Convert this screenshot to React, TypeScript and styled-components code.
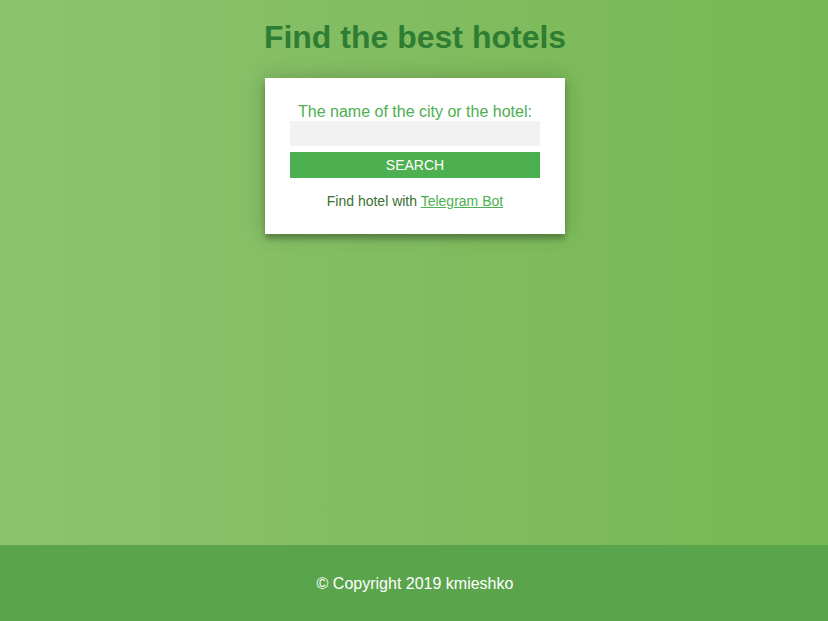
import React from "react";
import styled, { createGlobalStyle } from "styled-components";

const Global = createGlobalStyle`
  html, body { margin: 0; padding: 0; height: 100%; }
  body {
    font-family: "Liberation Sans", Arial, sans-serif;
    background: linear-gradient(to left, #76b852, #8dc26f);
    min-height: 100vh;
  }
  #root { min-height: 100vh; }
`;

const Page = styled.div`
  min-height: 100vh;
  display: flex;
  flex-direction: column;
  align-items: center;
`;

const Main = styled.main`
  flex: 1;
  display: flex;
  flex-direction: column;
  align-items: center;
  padding-left: 2px;
`;

const Title = styled.h1`
  margin: 19px 0 22px;
  font-size: 32px;
  font-weight: bold;
  color: #2e7d32;
  text-align: center;
`;

const Card = styled.div`
  width: 250px;
  padding: 25px;
  background: #fff;
  box-shadow: 0 0 20px 0 rgba(0, 0, 0, 0.2), 0 5px 5px 0 rgba(0, 0, 0, 0.24);
  display: flex;
  flex-direction: column;
  text-align: center;
`;

const Label = styled.label`
  font-size: 16px;
  line-height: 18px;
  color: #4caf50;
`;

const Input = styled.input`
  height: 25px;
  box-sizing: border-box;
  border: 0;
  outline: 0;
  background: #f2f2f2;
  margin: 0;
  padding: 0 10px;
  font-family: inherit;
  font-size: 14px;
`;

const Button = styled.button`
  margin-top: 6px;
  height: 26px;
  border: 0;
  background: #4caf50;
  color: #fff;
  font-family: inherit;
  font-size: 14px;
  text-transform: uppercase;
  cursor: pointer;
`;

const Note = styled.p`
  margin: 15px 0 0;
  font-size: 14px;
  line-height: 16px;
  color: #3a7030;
`;

const Link = styled.a`
  color: #4caf50;
  text-decoration: underline;
`;

const Footer = styled.footer`
  align-self: stretch;
  box-sizing: border-box;
  height: 76px;
  padding: 2px 0 0 2px;
  background: #5aa54c;
  display: flex;
  align-items: center;
  justify-content: center;
  color: #fff;
  font-size: 16px;
`;

export default function App() {
  return (
    <>
      <Global />
      <Page>
        <Main>
          <Title>Find the best hotels</Title>
          <Card>
            <Label htmlFor="q">The name of the city or the hotel:</Label>
            <Input id="q" type="text" />
            <Button>Search</Button>
            <Note>
              Find hotel with <Link href="#">Telegram Bot</Link>
            </Note>
          </Card>
        </Main>
        <Footer>© Copyright 2019 kmieshko</Footer>
      </Page>
    </>
  );
}
